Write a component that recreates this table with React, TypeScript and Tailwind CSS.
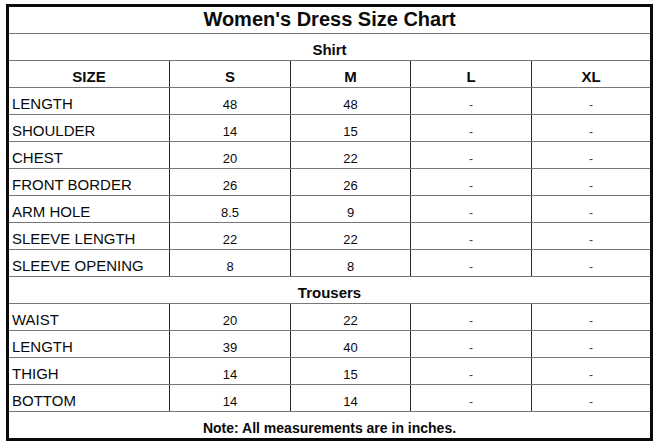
const shirtRows: [string, string, string][] = [
  ["LENGTH", "48", "48"],
  ["SHOULDER", "14", "15"],
  ["CHEST", "20", "22"],
  ["FRONT BORDER", "26", "26"],
  ["ARM HOLE", "8.5", "9"],
  ["SLEEVE LENGTH", "22", "22"],
  ["SLEEVE OPENING", "8", "8"],
];

const trouserRows: [string, string, string][] = [
  ["WAIST", "20", "22"],
  ["LENGTH", "39", "40"],
  ["THIGH", "14", "15"],
  ["BOTTOM", "14", "14"],
];

const cols = ["w-[161px]", "w-[121px]", "w-[120px]", "w-[121px]", "w-[118px]"];

const Row = ({ children }: { children: React.ReactNode }) => (
  <div className="flex h-[27px] border-b border-[#777]">{children}</div>
);

const Cell = ({
  w,
  children,
  last,
  className = "",
}: {
  w: string;
  children: React.ReactNode;
  last?: boolean;
  className?: string;
}) => (
  <div
    className={`${w} flex items-end pb-[3px] leading-none ${last ? "" : "border-r border-[#2a2a2a]"} ${className}`}
  >
    {children}
  </div>
);

const DataRow = ({ label, s, m }: { label: string; s: string; m: string }) => (
  <Row>
    <Cell w={cols[0]} className="pl-[3px] text-[15px]">
      {label}
    </Cell>
    <Cell w={cols[1]} className="justify-center text-[13px]">
      {s}
    </Cell>
    <Cell w={cols[2]} className="justify-center text-[13px]">
      {m}
    </Cell>
    <Cell w={cols[3]} className="justify-center text-[12px] text-[#444]">
      -
    </Cell>
    <Cell w={cols[4]} last className="justify-center text-[12px] text-[#444]">
      -
    </Cell>
  </Row>
);

const Section = ({ title }: { title: string }) => (
  <Row>
    <div className="flex w-full items-end justify-center pb-[3px] text-[15px] font-bold leading-none">
      {title}
    </div>
  </Row>
);

export default function App() {
  return (
    <div className="min-h-[447px] w-[660px] bg-white pl-[6px] pt-[4px] text-[#0a0a0a]" style={{ fontFamily: '"Liberation Sans", Arial, sans-serif' }}>
      <div className="w-[647px] border-[3px] border-[#0a0a0a]">
        <Row>
          <div className="flex w-full items-end justify-center pb-[4px] text-[20px] font-bold leading-none">
            Women's Dress Size Chart
          </div>
        </Row>
        <Section title="Shirt" />
        <Row>
          {["SIZE", "S", "M", "L", "XL"].map((h, i) => (
            <Cell key={h} w={cols[i]} last={i === 4} className="justify-center text-[15px] font-bold">
              {h}
            </Cell>
          ))}
        </Row>
        {shirtRows.map(([l, s, m]) => (
          <DataRow key={l} label={l} s={s} m={m} />
        ))}
        <Section title="Trousers" />
        {trouserRows.map(([l, s, m]) => (
          <DataRow key={l + s} label={l} s={s} m={m} />
        ))}
        <div className="flex h-[26px] items-end justify-center pb-[3px] text-[14px] font-bold leading-none">
          Note: All measurements are in inches.
        </div>
      </div>
    </div>
  );
}
